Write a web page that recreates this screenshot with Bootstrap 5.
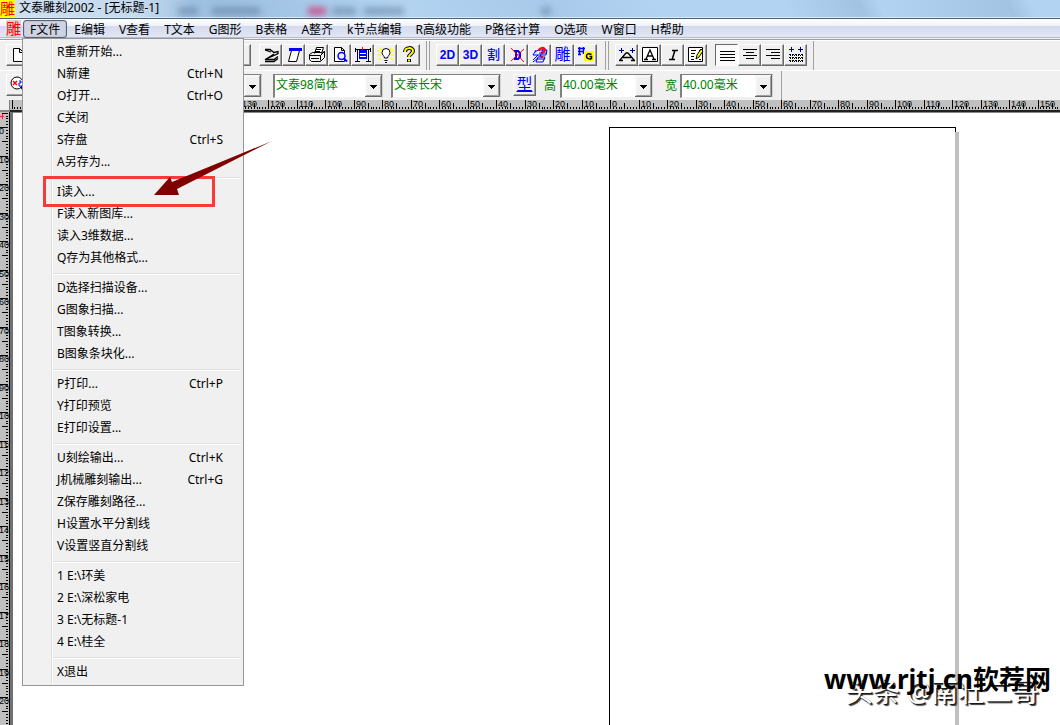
<!DOCTYPE html>
<html lang="zh-CN">
<head>
<meta charset="utf-8">
<meta name="viewport" content="width=device-width, initial-scale=1">
<title>文泰雕刻2002 - [无标题-1]</title>
<link href="https://cdn.jsdelivr.net/npm/bootstrap@5.3.0/dist/css/bootstrap.min.css" rel="stylesheet">
<style>
  body { font: 12px/16px "Noto Sans", "Noto Sans CJK SC", sans-serif; color: #000; background: #f0f0f0; }
  .titlebar { height: 19px; border-bottom: 1px solid #4d6175; box-shadow: inset 0 -1px #d9ecfb; font-size: 12px; position: relative; overflow: hidden;
    background: linear-gradient(62deg, #a9c9e8 0%, #9dbfe0 22%, #b3d3f1 38%, #a8c9e9 52%, #b3d3f3 62%, #b3d3f3 74%, #a3c3e3 81%, #b3d3f3 83%, #a3c3e3 95%, #b3d3f3 97%); }
  .titlebar .glare { position: absolute; left: 0; top: 0; width: 190px; height: 18px; background: linear-gradient(90deg, #d7e5f2cc, #d7e5f2aa 75%, transparent); }
  .titlebar .ghost { position: absolute; top: 7px; height: 8px; background: #5b7797; filter: blur(3px); opacity: .5; }
  .ghost-1 { left: 178px; width: 20px; }
  .ghost-2 { left: 212px; width: 48px; }
  .titlebar .ghost-3 { left: 308px; width: 18px; background: #d03070; opacity: .7; }
  .ghost-4 { left: 332px; width: 24px; }
  .ghost-5 { left: 364px; width: 40px; }
  .ghost-6 { left: 541px; width: 10px; }
  .seal { width: 15px; height: 17px; font-size: 15px; line-height: 16px; color: #f00; }
  .seal-title { background: #ff0; }
  .seal-doc { background: #d4d4d4; margin-left: 6px; }
  .menubar { height: 21px; background: linear-gradient(#fff, #eef1f8 36%, #d5dbee 37%, #e1e6f5 90%); border-bottom: 1px solid #a0a0a0; box-shadow: inset 0 -1px #f0f0f0, inset 0 -2px #b6bccc; padding-top: 1px; }
  .menubar .menu-btn { height: 18px; border: 1px solid transparent; border-radius: 3px; background: none; padding: 0 6px; font-size: 12px; line-height: 15px; white-space: nowrap; color: #000; }
  .menubar .menu-btn.show { background: #cdd3e2; border-color: #596273; box-shadow: inset 0 0 1px #596273; margin-left: 2px; }
  .file-menu.dropdown-menu { display: block; top: 18px; left: 1px; width: 222px; padding: 2px; border: 1px solid #979797; border-radius: 0; background: linear-gradient(90deg, #f1f1f1 28px, #e0e0e0 28px, #e0e0e0 29px, #fff 29px, #fff 30px, #f0f0f0 30px); font-size: 12px; margin: 0; }
  .file-menu .dropdown-item { height: 22px; padding: 0 18px 0 32px; line-height: 21px; color: #000; background: none; }
  .file-menu .dropdown-divider { height: 2px; margin: 4px 0 2px 28px; border: 0; border-top: 1px solid #e0e0e0; border-bottom: 1px solid #fff; opacity: 1; }
  .callout-box { position: absolute; left: 18px; top: -5px; width: 172px; height: 31px; border: 3px solid #f93a36; pointer-events: none; }
  .callout-arrow { position: absolute; left: 129px; top: -41px; pointer-events: none; }
  .tool-row { height: 30px; padding-top: 4px; border-top: 1px solid #fff; }
  .band { border-right: 1px solid #a0a0a0; border-bottom: 1px solid #a0a0a0; height: 30px; margin-top: -4px; padding: 3px 6px 0; }
  .band-size { border-bottom: 0; }
  .band + .band { border-left: 1px solid #a0a0a0; margin-left: 2px; }
  .tool { width: 23px; height: 22px; padding: 0; border: 1px solid; border-color: #fff #696969 #696969 #fff; box-shadow: inset -1px -1px #a0a0a0; background: #f0f0f0; color: #00f; font: bold 12px/18px "Liberation Sans", "Noto Sans CJK SC", sans-serif; display: flex; align-items: center; justify-content: center; flex: none; }
  .tool.pressed { border-color: #696969 #fff #fff #696969; background: #fafafa; box-shadow: none; }
  .tool.han { font-size: 16px; font-weight: 400; }
  .tool.han-sm { font-size: 13px; font-weight: 500; }
  .tool svg { display: block; }
  .combo { height: 24px; appearance: none; border: 1px solid; border-color: #808080 #d4d4d4 #f0f0f0 #808080; border-left-width: 2px; border-radius: 0; color: #008000; padding: 0 18px 2px 1px; font-size: 12px; flex: none; outline: 0;
    background: #fff url("data:image/svg+xml,%3Csvg xmlns='http://www.w3.org/2000/svg' width='17' height='22'%3E%3Cpath fill='%23f0f0f0' d='M0 0h17v22H0z'/%3E%3Cpath d='M1 21V1h15' fill='none' stroke='%23fff'/%3E%3Cpath d='M0 21.500h16.500V0' fill='none' stroke='%23696969'/%3E%3Cpath d='M1 20.500h14.500V1' fill='none' stroke='%23a0a0a0'/%3E%3Cpath d='M5 10h7v1h-1v1h-1v1H9v1H8v-1H7v-1H6v-1H5z'/%3E%3C/svg%3E") no-repeat right top; }
  .combo-font { width: 110px; }
  .combo-scale { margin: 0 11px 0 123px; }
  .combo-size { width: 93px; }
  .field-label { color: #008000; width: 16px; font-size: 12px; }
  .field-label-wide { width: 19px; }
  .tool-gap { width: 222px; }
  .ruler { background: #c0c0c0; overflow: hidden; }
  .ruler svg { display: block; }
  .ruler text { font: 9px "Liberation Sans", sans-serif; fill: #000; }
  .ruler-top { height: 12px; border-bottom: 2px solid #222; }
  .ruler-side { width: 10px; border-right: 1px solid #000; flex: none; }
  .corner { width: 10px; height: 12px; flex: none; background: #f0f0f0; border-right: 1px solid #808080; border-bottom: 2px solid #888; }
  .work { min-height: 0; }
  .canvas { background: #fff; border-left: 3px solid #707070; box-shadow: inset 0 1px #8a8a8a; position: relative; overflow: hidden; }
  .sheet { position: absolute; left: 596px; top: 15px; width: 347px; bottom: 0; border: 1px solid #000; border-width: 1px 0 0 1px; }
  .sheet::before { content: ""; position: absolute; right: 0; top: 0; width: 1px; height: 4px; background: #000; }
  .sheet::after { content: ""; position: absolute; right: -3px; top: 4px; width: 4px; bottom: 0; background: #c0c0c0; }
  .credit { position: absolute; right: 9px; bottom: 31px; font: bold 26px/30px "Noto Sans", "Noto Sans CJK SC", sans-serif; white-space: nowrap; }
  .credit-author { right: 21px; bottom: 18px; font-size: 27px; font-weight: 400; color: #fff; text-shadow: 1px 1px 1px #111, 2px 2px 1px #444; }
</style>
</head>
<body class="vh-100 overflow-hidden d-flex flex-column">
<header class="titlebar d-flex flex-shrink-0">
  <span class="glare"></span>
  <span class="ghost ghost-1"></span>
  <span class="ghost ghost-2"></span>
  <span class="ghost ghost-3"></span>
  <span class="ghost ghost-4"></span>
  <span class="ghost ghost-5"></span>
  <span class="ghost ghost-6"></span>
  <span class="seal seal-title position-relative">雕</span>
  <span class="position-relative ps-1 text-nowrap lh-sm">文泰雕刻2002 - [无标题-1]</span>
</header>

<nav class="menubar d-flex flex-shrink-0" aria-label="主菜单">
  <span class="seal seal-doc">雕</span>
  <div class="dropdown position-relative">
    <button type="button" class="menu-btn show" aria-expanded="true">F文件</button>
    <ul class="dropdown-menu file-menu show">
      <li><a class="dropdown-item" href="#">R重新开始...</a></li>
      <li><a class="dropdown-item d-flex justify-content-between" href="#">N新建<span>Ctrl+N</span></a></li>
      <li><a class="dropdown-item d-flex justify-content-between" href="#">O打开...<span>Ctrl+O</span></a></li>
      <li><a class="dropdown-item" href="#">C关闭</a></li>
      <li><a class="dropdown-item d-flex justify-content-between" href="#">S存盘<span>Ctrl+S</span></a></li>
      <li><a class="dropdown-item" href="#">A另存为...</a></li>
      <li><hr class="dropdown-divider"></li>
      <li class="position-relative"><a class="dropdown-item" href="#">I读入...</a>
        <span class="callout-box"></span>
        <svg class="callout-arrow" width="120" height="58" aria-hidden="true"><path fill="#800000" d="M0 55 16 37l2 5L118 1 23 49l2 6z"/></svg>
      </li>
      <li><a class="dropdown-item" href="#">F读入新图库...</a></li>
      <li><a class="dropdown-item" href="#">读入3维数据...</a></li>
      <li><a class="dropdown-item" href="#">Q存为其他格式...</a></li>
      <li><hr class="dropdown-divider"></li>
      <li><a class="dropdown-item" href="#">D选择扫描设备...</a></li>
      <li><a class="dropdown-item" href="#">G图象扫描...</a></li>
      <li><a class="dropdown-item" href="#">T图象转换...</a></li>
      <li><a class="dropdown-item" href="#">B图象条块化...</a></li>
      <li><hr class="dropdown-divider"></li>
      <li><a class="dropdown-item d-flex justify-content-between" href="#">P打印...<span>Ctrl+P</span></a></li>
      <li><a class="dropdown-item" href="#">Y打印预览</a></li>
      <li><a class="dropdown-item" href="#">E打印设置...</a></li>
      <li><hr class="dropdown-divider"></li>
      <li><a class="dropdown-item d-flex justify-content-between" href="#">U刻绘输出...<span>Ctrl+K</span></a></li>
      <li><a class="dropdown-item d-flex justify-content-between" href="#">J机械雕刻输出...<span>Ctrl+G</span></a></li>
      <li><a class="dropdown-item" href="#">Z保存雕刻路径...</a></li>
      <li><a class="dropdown-item" href="#">H设置水平分割线</a></li>
      <li><a class="dropdown-item" href="#">V设置竖直分割线</a></li>
      <li><hr class="dropdown-divider"></li>
      <li><a class="dropdown-item" href="#">1 E:\环美</a></li>
      <li><a class="dropdown-item" href="#">2 E:\深松家电</a></li>
      <li><a class="dropdown-item" href="#">3 E:\无标题-1</a></li>
      <li><a class="dropdown-item" href="#">4 E:\桂全</a></li>
      <li><hr class="dropdown-divider"></li>
      <li><a class="dropdown-item" href="#">X退出</a></li>
    </ul>
  </div>
  <button type="button" class="menu-btn">E编辑</button>
  <button type="button" class="menu-btn">V查看</button>
  <button type="button" class="menu-btn">T文本</button>
  <button type="button" class="menu-btn">G图形</button>
  <button type="button" class="menu-btn">B表格</button>
  <button type="button" class="menu-btn">A整齐</button>
  <button type="button" class="menu-btn">k节点编辑</button>
  <button type="button" class="menu-btn">R高级功能</button>
  <button type="button" class="menu-btn">P路径计算</button>
  <button type="button" class="menu-btn">O选项</button>
  <button type="button" class="menu-btn">W窗口</button>
  <button type="button" class="menu-btn">H帮助</button>
</nav>

<div class="tool-row d-flex flex-shrink-0" role="toolbar" aria-label="标准工具">
  <div class="band d-flex">
    <button type="button" class="tool" aria-label="新建"><svg width="18" height="18"><path d="M4.500 2.500h6l4 4v9h-10zM10.500 2.500v4h4" fill="#fff" stroke="#000"/></svg></button>
    <div class="tool-gap d-flex justify-content-end"><button type="button" class="tool" aria-label="工具"></button></div>
    <div class="d-flex ps-2">
      <button type="button" class="tool" aria-label="轮廓"><svg width="18" height="18"><path d="M3 3.500h5l4 3 4-1v2l-4 2-9 4h9l4-3M3 4l6 2M3 15.500h9l4-3M4 13l5-3 3-2" fill="none" stroke="#000" stroke-width="1.300"/></svg></button>
      <button type="button" class="tool" aria-label="图纸"><svg width="18" height="18"><path d="M6.500 4.500h8l-3 11h-8z" fill="#fff" stroke="#000"/><path d="M4 2h13v3H4z" fill="#00f"/></svg></button>
      <button type="button" class="tool" aria-label="打印"><svg width="18" height="18"><path d="M6.500 7.500l2-6h7l-2 6" fill="#fff" stroke="#000"/><path d="M8 3.500h5M7 5.500h5" stroke="#000"/><path d="M1.500 8.500l3-2h10l2-1v6l-4 4h-9l-2-2zM1.500 9.500h11v5M12.500 9.500l4-4M3 12.500h8" fill="none" stroke="#000"/></svg></button>
      <button type="button" class="tool" aria-label="预览"><svg width="18" height="18"><path d="M3.500 1.500h7l3 3v11h-10zM10.500 1.500v3h3" fill="#fff" stroke="#000"/><circle cx="10.500" cy="10" r="3.500" fill="#e8f4ff" stroke="#00f" stroke-width="1.500"/><path d="M13 12.500l3 3" stroke="#00f" stroke-width="2"/></svg></button>
      <button type="button" class="tool" aria-label="刻绘"><svg width="18" height="18"><path d="M1 3.500h16M1.500 2v4M16.500 2v4M3.500 4v11M14.500 4v11M1 15.500h5M12 15.500h5" fill="none" stroke="#000"/><path d="M5 4h8v9H5z" fill="#00f"/><path d="M6 7.500h6M6 10.500h6" stroke="#fff"/><path d="M8.500 1v3" stroke="#f00"/></svg></button>
      <button type="button" class="tool" aria-label="提示"><svg width="18" height="18"><path d="M1 4l3 2M1 9h3M2 14l2-2M17 4l-3 2M17 9h-3M16 14l-2-2M3 2l2 2M15 2l-2 2" stroke="#ff0" stroke-width="1.500"/><path d="M7.500 12c0-2-2.500-3-2.500-5.500a4 4 0 0 1 8 0C13 9 10.500 10 10.500 12zM7.500 14.500h3M8 16.500h2" fill="#fff" stroke="#000"/></svg></button>
      <button type="button" class="tool" aria-label="帮助"><svg width="18" height="18"><path d="M5 6c0-5 8-5 8-1 0 3-4 3-4 6M9 13v3" fill="none" stroke="#000" stroke-width="4"/><path d="M5 6c0-5 8-5 8-1 0 3-4 3-4 6M9 13.500v2" fill="none" stroke="#ff0" stroke-width="2"/></svg></button>
    </div>
  </div>
  <div class="band d-flex pe-2">
    <button type="button" class="tool">2D</button>
    <button type="button" class="tool">3D</button>
    <button type="button" class="tool han-sm">割</button>
    <button type="button" class="tool" aria-label="删除"><svg width="18" height="18"><path d="M6 5h4l2 2v4l-2 2H6M8 5v8" fill="none" stroke="#00f" stroke-width="2"/><path d="M3 2l13 14M16 3L3 15" stroke="#f00"/></svg></button>
    <button type="button" class="tool" aria-label="查询"><svg width="18" height="18"><path d="M5 4L2 9h5l-5 5M4 6l5-3M8 4h8l-1 5H7M8 7h8M7 11h7l-2 5H5l2-5M6 13h8M12 3l-3 8M2 16l5-4" fill="none" stroke="#00f"/><path d="M8 5c0-4 6-4 6-1 0 2-3 2-3 4M11 10v2" fill="none" stroke="#f00" stroke-width="2"/></svg></button>
    <button type="button" class="tool han">雕</button>
    <button type="button" class="tool" aria-label="转换G代码"><svg width="18" height="18"><path d="M1 2.500h7M1 5.500h6M1 8.500h3M2.500 1v8M6.500 1v7" stroke="#00f" stroke-width="1.500"/><path d="M7 5h10v10H7z" fill="#ff0"/><path d="M14.500 8.500c-4-2-5 0-5 2s3 3 5 2v-2h-2" fill="none" stroke="#000" stroke-width="1.500"/></svg></button>
  </div>
  <div class="band d-flex">
    <button type="button" class="tool" aria-label="字距"><svg width="18" height="18"><path d="M1 4.500h5M3.500 2v5M12 4.500h5M14.500 2v5" stroke="#000080"/><path d="M2 14l6-7h2l6 7M5 11.500h8M1 14.500h4M13 14.500h4" fill="none" stroke="#000" stroke-width="1.300"/></svg></button>
    <button type="button" class="tool" aria-label="字框"><svg width="18" height="18"><path d="M1.500 1.500h15v14h-15z" fill="#fff" stroke="#000"/><path d="M5 13L9 4l4 9M6 10h6M3 13.500h4M11 13.500h4" fill="none" stroke="#000" stroke-width="1.300"/></svg></button>
    <button type="button" class="tool" aria-label="斜体"><svg width="18" height="18"><path d="M8 4.500h6M5 13.500h6M11 4L8 14" stroke="#000" stroke-width="1.500" fill="none"/></svg></button>
    <button type="button" class="tool" aria-label="编辑文字"><svg width="18" height="18"><path d="M1.500 1.500h14v14h-14zM4 4.500h5M12 4.500h2M4 7.500h4M4 10.500h3M4 13.500h3M12 13.500h2" fill="#fff" stroke="#000"/><path d="M9 13l1-4 4-6 2 2-4 6z" fill="#ff0" stroke="#000"/></svg></button>
    <button type="button" class="tool pressed ms-2" aria-label="两端对齐"><svg width="18" height="18"><path d="M2 5.500h15M2 8.500h15M2 11.500h15M2 14.500h15" stroke="#000"/></svg></button>
    <button type="button" class="tool" aria-label="居中"><svg width="18" height="18"><path d="M2 3.500h14M5 6.500h8M2 9.500h14M5 12.500h8" stroke="#000"/></svg></button>
    <button type="button" class="tool" aria-label="右对齐"><svg width="18" height="18"><path d="M2 3.500h14M7 6.500h9M2 9.500h14M7 12.500h9" stroke="#000"/></svg></button>
    <button type="button" class="tool" aria-label="行宽"><svg width="18" height="18"><path d="M2 3.500h5M4.500 1v5M11 3.500h5M13.500 1v5" stroke="#000080"/><path d="M2 8.500h14M2 11.500h14M2 14.500h14" stroke="#000" stroke-dasharray="2 1"/><path d="M3 9.500h13M3 12.500h13M3 15.500h13" stroke="#000" stroke-dasharray="1 1"/></svg></button>
  </div>
</div>

<div class="tool-row d-flex flex-shrink-0">
  <div class="band band-size d-flex align-items-start pe-2">
    <button type="button" class="tool" aria-label="缩放"><svg width="18" height="18"><circle cx="8" cy="7" r="6" fill="#fff" stroke="#000"/><path d="M4 5l4 4M8 5L4 9" stroke="#f00" stroke-width="1.500"/><path d="M10 5h2v2h-2v3h3" stroke="#00f" fill="none"/><path d="M12 11l4 5" stroke="#000" stroke-width="2"/></svg></button>
    <select class="combo combo-font combo-scale" aria-label="比例"><option></option></select>
    <select class="combo combo-font" aria-label="中文字体"><option>文泰98简体</option></select>
    <select class="combo combo-font mx-2" aria-label="字形"><option>文泰长宋</option></select>
    <button type="button" class="tool han text-decoration-underline ms-1">型</button>
    <label class="field-label ms-2 pt-1" for="h">高</label>
    <select id="h" class="combo combo-size"><option>40.00毫米</option></select>
    <label class="field-label field-label-wide ms-2 ps-1 pt-1" for="w">宽</label>
    <select id="w" class="combo combo-size"><option>40.00毫米</option></select>
  </div>
</div>

<div class="d-flex flex-shrink-0">
  <div class="corner"></div>
  <div class="ruler ruler-top flex-grow-1" id="rulerTop"></div>
</div>
<main class="work d-flex flex-grow-1">
  <div class="ruler ruler-side" id="rulerSide"></div>
  <section class="canvas flex-grow-1" aria-label="画布">
    <div class="sheet"></div>
    <span class="credit credit-author">头条 @南壮二哥</span>
    <span class="credit">www.rjtj.cn软荐网</span>
  </section>
</main>

<script src="https://cdn.jsdelivr.net/npm/bootstrap@5.3.0/dist/js/bootstrap.bundle.min.js"></script>
<script>
  // 285 pixels per 100 millimetres; the origin is the sheet's top left corner
  const at = (origin, mm) => origin + Math.round(mm * 2.85);

  function drawTop(el, origin) {
    const width = el.clientWidth;
    const menuEnd = document.querySelector('.file-menu').getBoundingClientRect().right - el.getBoundingClientRect().left;
    let d = '', t = '';
    for (let i = -Math.floor(origin / 2.85); at(origin, i) < width; i++) {
      const x = at(origin, i), h = i % 10 === 0 ? 10 : i % 5 === 0 ? 6 : 2;
      d += `M${x} ${9 - h}h1v${h}h-1z`;
      // labels that would lie wholly under the open menu are skipped
      if (i % 10 === 0 && x + 16 > menuEnd) t += `<text x="${x + 2}" y="7">${Math.abs(i)}</text>`;
    }
    el.innerHTML = `<svg width="${width}" height="10" shape-rendering="crispEdges"><path d="${d}"/>${t}</svg>`;
  }

  function drawSide(el, origin) {
    const height = el.clientHeight;
    let d = '', t = '';
    for (let i = -5; at(origin, i) < height; i++) {
      const y = at(origin, i), w = i % 10 === 0 ? 9 : i % 5 === 0 ? 6 : 2;
      d += `M${8 - w} ${y}h${w}v1h-${w}z`;
      if (i >= 0 && i % 10 === 0) t += `<text x="-1" y="${y + 7}">${i}</text>`;
    }
    el.innerHTML = `<svg width="9" height="${height}" shape-rendering="crispEdges"><path d="${d}"/><path d="M0 4h4v1H0zM2 2h1v5H2z" fill="#e03030"/>${t}</svg>`;
  }

  function draw() {
    drawTop(document.getElementById('rulerTop'), 600);
    const side = document.getElementById('rulerSide');
    side.innerHTML = '';
    drawSide(side, 15);
  }
  draw();
  addEventListener('resize', draw);
</script>
</body>
</html>
